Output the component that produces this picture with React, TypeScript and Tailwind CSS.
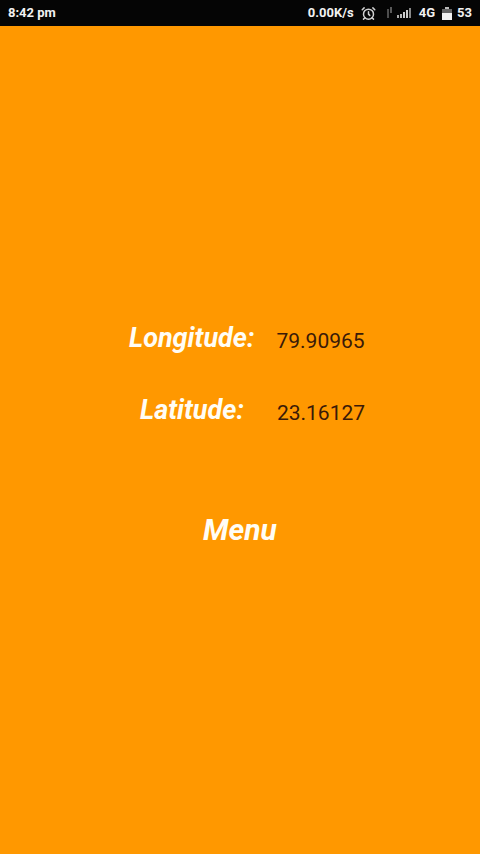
import { AlarmClock } from "lucide-react";

function StatusBar() {
  return (
    <div className="h-[26px] shrink-0 bg-[#050505] flex items-center justify-between pl-2 pr-2 text-[13px] font-bold text-[#f2f2f2] font-['Roboto',sans-serif]">
      <span>8:42 pm</span>
      <div className="flex items-center">
        <span>0.00K/s</span>
        <AlarmClock className="ml-[7px] w-[15px] h-[15px] text-[#d0d0d0]" strokeWidth={2.4} />
        {/* signal + data arrows */}
        <svg className="ml-[9px]" width="30" height="14" viewBox="0 0 30 14">
          <path d="M3 3v9" stroke="#666" strokeWidth="1.5" fill="none" />
          <path d="M6 1v6" stroke="#777" strokeWidth="1.5" fill="none" />
          <rect x="12" y="9" width="2" height="3" fill="#aaa" />
          <rect x="15" y="8" width="2" height="4" fill="#bbb" />
          <rect x="18" y="6" width="2" height="6" fill="#ccc" />
          <rect x="21" y="4" width="2" height="8" fill="#ccc" />
          <rect x="24" y="2" width="2" height="10" fill="#888" />
        </svg>
        <span className="ml-[4px]">4G</span>
        <svg className="ml-[7px]" width="10" height="15" viewBox="0 0 10 15">
          <rect x="3" y="1" width="4" height="2" fill="#bbb" />
          <rect x="0" y="3" width="10" height="4" fill="#666" />
          <rect x="0" y="7" width="10" height="7" fill="#f2f2f2" />
        </svg>
        <span className="ml-[5px]">53</span>
      </div>
    </div>
  );
}

export default function App() {
  return (
    <div className="w-[480px] h-[854px] flex flex-col bg-[#ff9800] overflow-hidden font-['Roboto',sans-serif]">
      <StatusBar />
      <div className="flex-1 flex flex-col pt-[295px]">
        <div className="flex items-start h-[34px]">
          <span className="ml-[129px] text-[27px] leading-[34px] font-bold italic text-[#fffdf5]">Longitude:</span>
          <span className="ml-[22px] mt-[3px] text-[21px] leading-[34px] text-[#3a1a08]">79.90965</span>
        </div>
        <div className="flex items-start h-[34px] mt-[38px]">
          <span className="ml-[140px] text-[27px] leading-[34px] font-bold italic text-[#fffdf5]">Latitude:</span>
          <span className="ml-[33px] mt-[3px] text-[21px] leading-[34px] text-[#3a1a08]">23.16127</span>
        </div>
        <div className="mt-[85px] text-center text-[30px] leading-[36px] font-bold italic text-[#fffdf5]">Menu</div>
      </div>
    </div>
  );
}
